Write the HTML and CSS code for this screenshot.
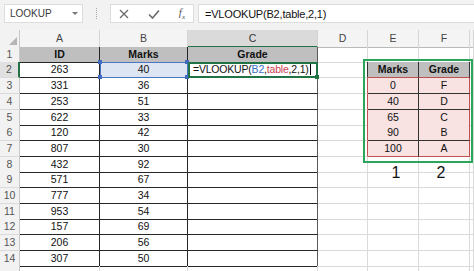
FILE: index.html
```html
<!DOCTYPE html>
<html lang="en">
<head>
    <meta charset="UTF-8">
    <title>VLOOKUP grade table</title>
    <link rel="stylesheet" href="styles.css">
</head>
<body>
    <div class="toolbar">
        <div class="namebox"><span>LOOKUP</span><span class="caret"></span></div>
        <div class="grip"></div>
        <div class="fbtns">
            <svg width="10" height="10" viewBox="0 0 10 10"><path d="M1 1L9 9M9 1L1 9" stroke="#6b6b6b" stroke-width="1.3" fill="none"/></svg>
            <svg width="12" height="10" viewBox="0 0 12 10"><path d="M1 5.5L4.5 9L11 1.5" stroke="#6b6b6b" stroke-width="1.6" fill="none"/></svg>
            <span class="fx">f<sub>x</sub></span>
        </div>
        <div class="formula">=VLOOKUP(B2,table,2,1)</div>
    </div>

    <div class="sheet">
        <div class="row head">
            <div class="corner"></div>
            <div class="ch">A</div><div class="ch">B</div><div class="ch on">C</div><div class="ch">D</div><div class="ch">E</div><div class="ch">F</div><div class="ch"></div>
        </div>
        <div class="row">
            <div class="rh">1</div>
            <div class="c t hd">ID</div><div class="c t hd">Marks</div><div class="c t tc hd">Grade</div><div class="c"></div><div class="c lk-top"></div><div class="c lk-top"></div><div class="c"></div>
        </div>
        <div class="row">
            <div class="rh on">2</div>
            <div class="c t">263</div>
            <div class="c t sel">40<i class="hdl h1"></i><i class="hdl h2"></i><i class="hdl h3"></i><i class="hdl h4"></i></div>
            <div class="c t tc edit">=VLOOKUP(<span class="ref">B2</span>,<span class="tbl">table</span>,2,1)<span class="cursor"></span><i class="fill"></i></div>
            <div class="c lk-edge"></div><div class="c lk lk-head">Marks</div><div class="c lk lk-head">Grade</div><div class="c"></div>
        </div>
        <div class="row">
            <div class="rh">3</div>
            <div class="c t">331</div><div class="c t">36</div><div class="c t tc"></div><div class="c lk-red"></div><div class="c lk">0</div><div class="c lk lk-r">F</div><div class="c"></div>
        </div>
        <div class="row">
            <div class="rh">4</div>
            <div class="c t">253</div><div class="c t">51</div><div class="c t tc"></div><div class="c lk-red"></div><div class="c lk">40</div><div class="c lk lk-r">D</div><div class="c"></div>
        </div>
        <div class="row">
            <div class="rh">5</div>
            <div class="c t">622</div><div class="c t">33</div><div class="c t tc"></div><div class="c lk-red"></div><div class="c lk">65</div><div class="c lk lk-r">C</div><div class="c"></div>
        </div>
        <div class="row">
            <div class="rh">6</div>
            <div class="c t">120</div><div class="c t">42</div><div class="c t tc"></div><div class="c lk-red"></div><div class="c lk">90</div><div class="c lk lk-r">B</div><div class="c"></div>
        </div>
        <div class="row">
            <div class="rh">7</div>
            <div class="c t">807</div><div class="c t">30</div><div class="c t tc"></div><div class="c lk-red"></div><div class="c lk lk-b">100</div><div class="c lk lk-r lk-b">A</div><div class="c"></div>
        </div>
        <div class="row">
            <div class="rh">8</div>
            <div class="c t">432</div><div class="c t">92</div><div class="c t tc"></div><div class="c"></div><div class="c"></div><div class="c"></div><div class="c"></div>
        </div>
        <div class="row">
            <div class="rh">9</div>
            <div class="c t">571</div><div class="c t">67</div><div class="c t tc"></div><div class="c"></div><div class="c"></div><div class="c"></div><div class="c"></div>
        </div>
        <div class="row">
            <div class="rh">10</div>
            <div class="c t">777</div><div class="c t">34</div><div class="c t tc"></div><div class="c"></div><div class="c"></div><div class="c"></div><div class="c"></div>
        </div>
        <div class="row">
            <div class="rh">11</div>
            <div class="c t">953</div><div class="c t">54</div><div class="c t tc"></div><div class="c"></div><div class="c"></div><div class="c"></div><div class="c"></div>
        </div>
        <div class="row">
            <div class="rh">12</div>
            <div class="c t">157</div><div class="c t">69</div><div class="c t tc"></div><div class="c"></div><div class="c"></div><div class="c"></div><div class="c"></div>
        </div>
        <div class="row">
            <div class="rh">13</div>
            <div class="c t">206</div><div class="c t">56</div><div class="c t tc"></div><div class="c"></div><div class="c"></div><div class="c"></div><div class="c"></div>
        </div>
        <div class="row">
            <div class="rh">14</div>
            <div class="c t">307</div><div class="c t">50</div><div class="c t tc"></div><div class="c"></div><div class="c"></div><div class="c"></div><div class="c"></div>
        </div>
        <div class="row">
            <div class="rh"></div>
            <div class="c"></div><div class="c"></div><div class="c"></div><div class="c"></div><div class="c"></div><div class="c"></div><div class="c"></div>
        </div>

        <!-- shape and text boxes drawn over the grid -->
        <div class="shape"></div>
        <div class="label l1">1</div>
        <div class="label l2">2</div>
    </div>
</body>
</html>
```

FILE: styles.css
```css
body {
    margin: 0;
    font-family: 'Liberation Sans', Arial, sans-serif;
    background: #fff;
    overflow: hidden;
}

.toolbar {
    height: 30px;
    box-sizing: border-box;
    padding: 4px 0 0 4px;
    display: flex;
    align-items: flex-start;
    background: #f2f2f2;
}

.namebox {
    width: 79px;
    height: 19px;
    box-sizing: border-box;
    background: #fff;
    border: 1px solid #dcdcdc;
    display: flex;
    align-items: center;
    justify-content: space-between;
    padding: 0 4px 0 5px;
    font-size: 10px;
    color: #3a3a3a;
}

.caret {
    width: 0;
    height: 0;
    border-left: 3px solid transparent;
    border-right: 3px solid transparent;
    border-top: 3px solid #777;
}

.grip {
    width: 1px;
    height: 11px;
    margin: 4px 12px 0 13px;
    border-left: 1px dotted #a8a8a8;
}

.fbtns {
    width: 84px;
    height: 19px;
    box-sizing: border-box;
    background: #fff;
    border: 1px solid #dcdcdc;
    display: flex;
    align-items: center;
    justify-content: space-between;
    padding: 0 8px 0 8px;
}

.fx {
    font-family: 'Liberation Serif', serif;
    font-style: italic;
    font-size: 11px;
    color: #555;
}

.fx sub {
    font-size: 7px;
}

.formula {
    flex: 1;
    height: 19px;
    box-sizing: border-box;
    margin-left: 4px;
    background: #fff;
    border: 1px solid #dcdcdc;
    border-right: none;
    padding-left: 6px;
    font-size: 11px;
    letter-spacing: -0.2px;
    line-height: 18px;
    color: #111;
}

.sheet {
    position: relative;
}

.row {
    display: grid;
    grid-template-columns: 20px 80px 88px 130px 50px 51px 51px 1fr;
    height: 15.7px;
}

.row.head {
    height: 16.8px;
}

.corner {
    background: #f2f2f2;
    border-right: 1px solid #c9c9c9;
    border-bottom: 1px solid #b9b9b9;
    display: flex;
    justify-content: flex-end;
    align-items: flex-end;
    padding: 0 2px 2px 0;
}

.corner::after {
    content: "";
    width: 8px;
    height: 8px;
    background: #b5b5b5;
    clip-path: polygon(100% 0, 100% 100%, 0 100%);
}

.ch {
    background: #f4f4f4;
    border-right: 1px solid #d4d4d4;
    border-bottom: 1px solid #b9b9b9;
    text-align: center;
    font-size: 10.5px;
    line-height: 16px;
    color: #444;
}

.ch.on {
    background: #dadada;
    border-bottom: 2px solid #217346;
    color: #333;
}

.rh {
    background: #f2f2f2;
    border-right: 1px solid #c9c9c9;
    border-bottom: 1px solid #dadada;
    text-align: center;
    font-size: 10.5px;
    line-height: 15px;
    color: #555;
}

.rh.on {
    background: #e0e0e0;
    border-right: 2px solid #217346;
}

.c {
    border-right: 1px solid #dadada;
    border-bottom: 1px solid #dadada;
    text-align: center;
    font-size: 10.5px;
    line-height: 15px;
    color: #111;
    white-space: nowrap;
    overflow: visible;
}

.t {
    border-right-color: #262626;
    border-bottom-color: #262626;
}

.t.tc {
    border-right-color: #5a5a5a;
}

.hd {
    background: #bfbfbf;
    font-weight: bold;
}

.sel {
    position: relative;
    background: #dde5f2;
    outline: 1px solid #4a74c4;
    outline-offset: -1px;
}

.hdl {
    position: absolute;
    width: 4px;
    height: 4px;
    background: #3f6cc0;
}

.h1 { left: -2px; top: -2px; }
.h2 { right: -2px; top: -2px; }
.h3 { left: -2px; bottom: -2px; }
.h4 { right: -2px; bottom: -2px; }

.edit {
    position: relative;
    text-align: left;
    padding-left: 5px;
    background: #fff;
    outline: 2px solid #217346;
    outline-offset: -2px;
    letter-spacing: -0.2px;
    z-index: 1;
}

.ref {
    color: #3a6fc4;
}

.tbl {
    color: #c9434e;
}

.cursor {
    display: inline-block;
    width: 1px;
    height: 11px;
    margin-left: 1px;
    vertical-align: -2px;
    background: #000;
}

.fill {
    position: absolute;
    right: -2px;
    bottom: -2px;
    width: 4px;
    height: 4px;
    background: #217346;
}

.lk-top {
    border-bottom-color: #333;
}

.lk-edge {
    border-right-color: #333;
}

.lk-red {
    border-right-color: #c0504d;
}

.lk {
    background: #f8e2e2;
    border-right-color: #333;
    border-bottom-color: #333;
}

.lk.lk-head {
    background: #bfbfbf;
    font-weight: bold;
    border-bottom-color: #c0504d;
}

.lk.lk-r {
    border-right-color: #c0504d;
}

.lk.lk-b {
    border-bottom-color: #c0504d;
}

.shape {
    position: absolute;
    left: 363px;
    top: 29px;
    width: 110px;
    height: 104px;
    box-sizing: border-box;
    border: 2px solid #2aa55a;
}

.label {
    position: absolute;
    top: 133px;
    width: 20px;
    text-align: center;
    font-size: 16px;
    line-height: 20px;
    color: #111;
}

.l1 { left: 386px; }
.l2 { left: 431px; }
```
